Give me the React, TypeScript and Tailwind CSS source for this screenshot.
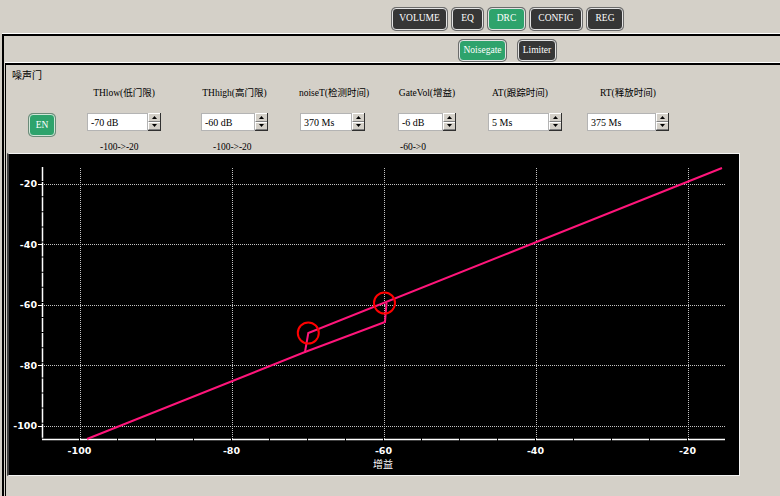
const tabs = [
    { label: 'VOLUME', cls: 'w-[55px]' },
    { label: 'EQ', cls: 'w-[31px]' },
    { label: 'DRC', cls: 'w-[37px]', active: true },
    { label: 'CONFIG', cls: 'w-[52px]' },
    { label: 'REG', cls: 'w-[36px]' },
];

const params = [
    { label: 'THlow(低门限)', value: '-70 dB', hint: '-100->-20', col: 'ml-[32px] w-[74px]', hintCls: 'pl-[13px]', labelCls: '' },
    { label: 'THhigh(高门限)', value: '-60 dB', hint: '-100->-20', col: 'ml-[40px] w-[67px]', hintCls: 'pl-[12px]', labelCls: '' },
    { label: 'noiseT(检测时间)', value: '370 Ms', hint: '', col: 'ml-[32px] w-[65px]', hintCls: '', labelCls: 'pl-[3px]' },
    { label: 'GateVol(增益)', value: '-6 dB', hint: '-60->0', col: 'ml-[33px] w-[58px]', hintCls: 'pl-[2px]', labelCls: '' },
    { label: 'AT(跟踪时间)', value: '5 Ms', hint: '', col: 'ml-[32px] w-[74px]', hintCls: '', labelCls: 'pr-[10px]' },
    { label: 'RT(释放时间)', value: '375 Ms', hint: '', col: 'ml-[25px] w-[82px]', hintCls: '', labelCls: '' },
];

function Btn({ label, active, cls = '' }: { label: string; active?: boolean; cls?: string }) {
    return (
        <div
            className={`flex items-center justify-center rounded-[4px] border border-[#e4e4e4] shadow-[0_0_0_1px_#6a6a6a] text-[9.5px] leading-none text-white ${active ? 'bg-[#2ea36c]' : 'bg-[#363636]'} ${cls}`}
        >
            {label}
        </div>
    );
}

function Arrow({ up }: { up?: boolean }) {
    return (
        <div className="flex flex-1 items-center justify-center border-t border-l border-white border-b border-b-[#808080] bg-[#d4d0c8]">
            <svg width="5" height="3" viewBox="0 0 5 3">
                <path d={up ? 'M2.5 0 L5 3 L0 3 Z' : 'M0 0 L5 0 L2.5 3 Z'} fill="#000" />
            </svg>
        </div>
    );
}

function SpinInput({ value }: { value: string }) {
    return (
        <div className="flex h-[18px]">
            <div className="flex flex-1 items-center border border-[#b4b4b4] bg-white pl-[3px] text-[10px] text-black">
                {value}
            </div>
            <div className="flex w-[13px] flex-col border-r border-b border-[#303030]">
                <Arrow up />
                <Arrow />
            </div>
        </div>
    );
}

const X = (v: number) => 79.5 + (v + 100) * 7.6;
const Y = (v: number) => 184.5 + (-20 - v) * 3.03;
const ticks = [-100, -80, -60, -40, -20];

function Chart() {
    return (
        <svg width="730" height="321" viewBox="0 0 730 321" className="block">
            <g transform="translate(-9 -155)">
                {ticks.map(t => (
                    <line key={'h' + t} x1={42} x2={726} y1={Math.round(Y(t)) + 0.5} y2={Math.round(Y(t)) + 0.5} stroke="#c4c4c4" strokeWidth={1} strokeDasharray="1 1" />
                ))}
                {ticks.map(t => (
                    <line key={'v' + t} x1={Math.round(X(t)) + 0.5} x2={Math.round(X(t)) + 0.5} y1={169} y2={440} stroke="#c4c4c4" strokeWidth={1} strokeDasharray="1 1" />
                ))}
                <line x1={42.5} x2={42.5} y1={168} y2={440} stroke="#fff" strokeWidth={1.5} strokeDasharray="14.1 1" />
                <line x1={42} x2={726} y1={440.5} y2={440.5} stroke="#fff" strokeWidth={1.5} strokeDasharray="37 1" />
                {ticks.map(t => (
                    <line key={'t' + t} x1={38} x2={42} y1={Math.round(Y(t)) + 0.5} y2={Math.round(Y(t)) + 0.5} stroke="#fff" strokeWidth={1} />
                ))}
                {ticks.map(t => (
                    <text key={'yl' + t} x={37} y={Y(t) + 3.5} textAnchor="end" fill="#fff" fontSize="9.5" fontWeight="bold" fontFamily="DejaVu Sans, sans-serif">
                        {t}
                    </text>
                ))}
                {ticks.map(t => (
                    <text key={'xl' + t} x={X(t)} y={455} textAnchor="middle" fill="#fff" fontSize="9.5" fontWeight="bold" fontFamily="DejaVu Sans, sans-serif">
                        {t}
                    </text>
                ))}
                <text x={383} y={469} textAnchor="middle" fill="#fff" fontSize="10" fontFamily="Noto Sans CJK SC, sans-serif">
                    增益
                </text>
                <polyline points="87,440 305,353 308.3,334 722,169" fill="none" stroke="#ff157a" strokeWidth={2} />
                <polyline points="305,353 385,323 386.5,304" fill="none" stroke="#ff157a" strokeWidth={2} />
                <circle cx={308.3} cy={334} r={10.5} fill="none" stroke="#ff0000" strokeWidth={2} />
                <circle cx={384.5} cy={304} r={10.5} fill="none" stroke="#ff0000" strokeWidth={2} />
            </g>
        </svg>
    );
}

export default function App() {
    return (
        <div className="h-[496px] w-[780px] overflow-hidden bg-[#d4d0c8] font-['Liberation_Serif','Noto_Sans_CJK_SC',serif] text-black">
            <div className="flex h-[34px] gap-[5px] pt-[8px] pl-[392px]">
                {tabs.map(t => (
                    <Btn key={t.label} label={t.label} active={t.active} cls={`h-[22px] ${t.cls}`} />
                ))}
            </div>

            <div className="ml-[2px] border-t-2 border-l-2 border-black shadow-[0_-1px_0_#fff]">
                <div className="flex h-[27px] gap-[12px] pt-[4px] pl-[455px]">
                    <Btn label="Noisegate" active cls="h-[21px] w-[47px]" />
                    <Btn label="Limiter" cls="h-[21px] w-[38px]" />
                </div>

                <div className="ml-[1px] h-[440px] border-t-2 border-l border-black shadow-[0_-1px_0_#fff]">
                    <div className="pt-[5px] pl-[6px] text-[10px] leading-[12px]">噪声门</div>

                    <div className="mt-[5px] flex">
                        <div className="ml-[23px] w-[26px] pt-[27px]">
                            <div className="flex h-[22px] items-center justify-center rounded-[4px] border border-[#cfe6d8] bg-[#2ea36c] shadow-[0_0_0_1px_#6a8a78] text-[9.5px] text-white">
                                EN
                            </div>
                        </div>
                        {params.map(p => (
                            <div key={p.label} className={`flex flex-col ${p.col}`}>
                                <div className={`flex h-[12px] justify-center whitespace-nowrap text-[9.5px] leading-[12px] ${p.labelCls}`}>
                                    {p.label}
                                </div>
                                <div className="mt-[14px]">
                                    <SpinInput value={p.value} />
                                </div>
                                <div className={`mt-[11px] h-[10px] whitespace-nowrap text-[9.5px] leading-[10px] ${p.hintCls}`}>
                                    {p.hint}
                                </div>
                            </div>
                        ))}
                    </div>

                    <div className="mt-[1px] ml-[1px] w-[733px] border-t border-r border-b border-l-2 border-t-[#f4f4f4] border-r-[#f4f4f4] border-b-[#f4f4f4] border-l-[#404040] bg-black">
                        <Chart />
                    </div>
                </div>
            </div>
        </div>
    );
}
